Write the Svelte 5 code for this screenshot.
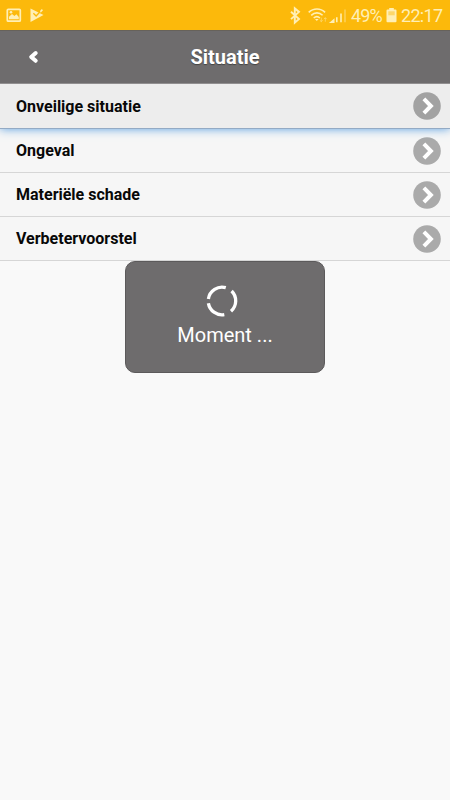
<script>
  const items = ['Onveilige situatie', 'Ongeval', 'Materiële schade', 'Verbetervoorstel'];
  let active = $state(0);
</script>

<div class="screen">
  <div class="status">
    <svg class="left" width="50" height="30" viewBox="0 0 50 30">
      <rect x="7.3" y="9.3" width="13" height="11.9" rx="1" fill="none" stroke="#ffefb5" stroke-width="1.7" />
      <path d="M9 19.300v-2.500l3-2.800 2.400 2 2-1.700 2.400 2.600v2.400z" fill="#ffefb5" />
      <circle cx="11" cy="12.300" r="1.300" fill="#ffefb5" />
      <path d="M30.500 8.500 43.500 15 30.500 22z" fill="#ffefb5" />
      <path d="m33.400 13.300 2.700 2.700 5.600-6" fill="none" stroke="#fbb90b" stroke-width="1.300" />
      <path d="m40 11 1.800-1.900 1.200 1.200-2.300 2.400z" fill="#ffefb5" />
    </svg>
    <div class="right">
      <svg width="60" height="30" viewBox="288 0 60 30" fill="none" stroke="#ffefb5">
        <path d="m291 11.800 8 7.200-4.200 3.600V8.400l4.200 3.500-8 7.200" stroke-width="1.900" />
        <path d="M308.700 12.400c4.700-4.600 11.800-4.600 16.400 0M311.200 15.300c3.400-3.200 8.100-3.200 11.400 0M313.700 18c1.900-1.600 4.400-1.600 6.200 0" stroke-width="1.600" />
        <path d="m315 19.100 1.800 2 1.800-2z" fill="#ffefb5" stroke="none" />
        <path d="M321.300 17.700v3.800m-1.400-1.200 1.400 1.400 1.400-1.400M325.300 21.700v-4m-1.400 1.400 1.400-1.400 1.400 1.400" stroke-width=".8" opacity=".6" />
        <path d="M331 22.300l2.700-2.300v2.300zM336.800 22.300v-5M341 22.300v-8.800" stroke-width="1.600" />
        <path d="M345 22.300V9.500" stroke-width="1.300" opacity=".55" />
      </svg>
      <span class="pct">49%</span>
      <svg class="batt" width="11" height="30" viewBox="0 0 11 30">
        <path d="M3.200 8h4.600v1.500H9.500a1 1 0 0 1 1 1v10.800a1 1 0 0 1-1 1h-8a1 1 0 0 1-1-1V10.500a1 1 0 0 1 1-1h1.700z" fill="#ffefb5" />
        <path d="M2.300 11.300h6.400v4H2.300z" fill="#fdd76a" />
      </svg>
      <span class="time">22:17</span>
    </div>
  </div>

  <header>
    <svg width="12" height="16" viewBox="0 0 12 16">
      <path d="M8.700 4 4.200 7.900 8.700 11.800" fill="none" stroke="#fff" stroke-width="4" stroke-linecap="round" stroke-linejoin="round" />
    </svg>
    <h1>Situatie</h1>
  </header>

  <ul>
    {#each items as item, i}
      <li>
        <button class:active={active === i} onclick={() => (active = i)}>
          <span>{item}</span>
          <svg width="28" height="28" viewBox="0 0 28 28">
            <circle cx="14" cy="14" r="13.800" fill={active === i ? '#a2a2a2' : '#aaa'} />
            <path d="m10.900 6.900 7 7.100-7 7.100" fill="none" stroke="#fff" stroke-width="4" />
          </svg>
        </button>
      </li>
    {/each}
  </ul>

  <div class="loader">
    <svg width="34" height="34" viewBox="0 0 34 34" fill="none" stroke="#fff" stroke-width="3.300">
      <path d="M3.400 14.900A13.800 13.800 0 0 1 20.800 3.700M26.600 7A13.800 13.800 0 0 1 26 27.200M19.300 30.600A13.800 13.800 0 0 1 3.400 19.200" />
    </svg>
    <p>Moment ...</p>
  </div>
</div>

<style>
  .screen {
    position: relative;
    width: 450px;
    height: 800px;
    overflow: hidden;
    background: #f9f9f9;
    font-family: Roboto, sans-serif;
  }
  .status {
    display: flex;
    justify-content: space-between;
    height: 30px;
    background: #fcb90b;
    color: #ffefb5;
    font-size: 18px;
    line-height: 32px;
  }
  .right {
    display: flex;
    width: 162px;
  }
  .right svg {
    flex: none;
  }
  .pct {
    width: 38px;
    padding-left: 3px;
    box-sizing: border-box;
    letter-spacing: -0.900px;
    white-space: nowrap;
  }
  .time {
    padding-left: 4px;
    letter-spacing: -0.700px;
  }
  header {
    display: flex;
    align-items: center;
    height: 54px;
    box-sizing: border-box;
    padding-left: 27px;
    border-top: 1px solid #67625a;
    border-bottom: 1px solid #918f90;
    background: #6e6c6d;
  }
  h1 {
    flex: 1;
    margin: 0 39px 0 0;
    text-align: center;
    font-size: 20px;
    line-height: 24px;
    font-weight: 700;
    color: #fff;
    text-shadow: 0 1px 1px #444;
  }
  ul {
    margin: 0;
    padding: 0;
    list-style: none;
  }
  li {
    height: 44px;
  }
  button {
    position: relative;
    display: flex;
    align-items: center;
    justify-content: space-between;
    width: 100%;
    height: 44px;
    box-sizing: border-box;
    margin: 0;
    padding: 0 9px 1px 16px;
    border: 0;
    background: #f6f6f6;
    box-shadow: inset 0 -1px 0 #d6d6d6;
    color: #080808;
    font: 700 16px/20px Roboto, sans-serif;
    text-align: left;
  }
  li:first-child,
  li:first-child button {
    height: 45px;
  }
  li:first-child span {
    padding-top: 2px;
  }
  button.active {
    z-index: 1;
    background: #ededed;
    box-shadow: inset 0 -1px 0 #93aac4, 0 0 9px #5b9fe0;
    clip-path: inset(0 0 -14px 0);
  }
  .loader {
    position: absolute;
    left: 125px;
    top: 261px;
    z-index: 2;
    display: flex;
    flex-direction: column;
    align-items: center;
    width: 200px;
    height: 112px;
    padding-top: 22px;
    box-sizing: border-box;
    border: 1px solid #5c5a5b;
    border-radius: 10px;
    background: #6e6c6d;
  }
  .loader svg {
    margin-right: 6px;
  }
  .loader p {
    margin: 5px 0 0;
    font-size: 20px;
    line-height: 24px;
    color: #fff;
  }
</style>
